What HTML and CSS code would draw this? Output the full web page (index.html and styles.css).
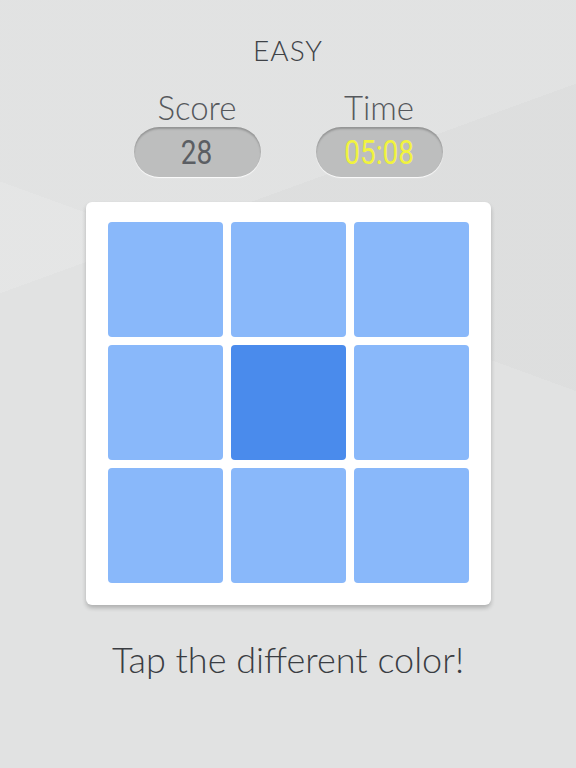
FILE: index.html
```html
<!DOCTYPE html>
<html lang="en">
  <head>
    <meta charset="UTF-8" />
    <meta name="viewport" content="width=device-width, initial-scale=1.0" />
    <title>Color game</title>
    <link rel="stylesheet" href="styles.css">
  </head>
  <body>
    <div class="screen">
      <h2 class="level">EASY</h2>
      <div class="stats">
        <div class="stat">
          <span class="stat-label">Score</span>
          <div class="pill"><span class="pill-value">28</span></div>
        </div>
        <div class="stat">
          <span class="stat-label">Time</span>
          <div class="pill time"><span class="pill-value">05:08</span></div>
        </div>
      </div>
      <div class="board">
        <div class="tile"></div>
        <div class="tile"></div>
        <div class="tile"></div>
        <div class="tile"></div>
        <div class="tile odd"></div>
        <div class="tile"></div>
        <div class="tile"></div>
        <div class="tile"></div>
        <div class="tile"></div>
      </div>
      <p class="hint">Tap the different color!</p>
    </div>
  </body>
</html>
```

FILE: styles.css
```css
html, body {
  margin: 0;
  height: 100%;
}
body {
  background-color: #e1e2e2;
  background-image:
    linear-gradient(160deg, rgba(255,255,255,0.12) 0 30%, transparent 30% 100%),
    linear-gradient(20deg, transparent 0 60%, rgba(0,0,0,0.015) 60% 100%);
  font-family: Lato, "Open Sans", sans-serif;
  color: #3f4247;
}
.screen {
  display: flex;
  flex-direction: column;
  align-items: center;
  padding-top: 33px;
}
.level {
  margin: 0;
  font-size: 28px;
  font-weight: 300;
  letter-spacing: 1px;
  line-height: 34px;
}
.stats {
  display: flex;
  gap: 55px;
  margin-top: 22px;
}
.stat {
  display: flex;
  flex-direction: column;
  align-items: center;
}
.stat-label {
  font-size: 33px;
  font-weight: 300;
  line-height: 36px;
  color: #55585c;
}
.pill {
  margin-top: 2px;
  width: 127px;
  height: 50px;
  border-radius: 25px;
  background: #bdbebe;
  box-shadow: inset 0 2px 2px rgba(0,0,0,0.22), 0 1px 1px rgba(255,255,255,0.9);
  display: flex;
  align-items: center;
  justify-content: center;
}
.pill-value {
  display: inline-block;
  font-family: Roboto, sans-serif;
  font-size: 33px;
  color: #5b5e63;
  transform: scaleX(0.85);
}
.pill.time .pill-value {
  color: #f1f33e;
}
.board {
  margin-top: 25px;
  width: 361px;
  padding: 20px 22px 22px 22px;
  background: #fff;
  border-radius: 6px;
  box-shadow: 0 3px 4px rgba(0,0,0,0.22);
  display: grid;
  grid-template-columns: repeat(3, 115px);
  grid-template-rows: repeat(3, 115px);
  gap: 8px;
}
.tile {
  background: #89b8fa;
  border-radius: 4px;
}
.tile.odd {
  background: #4a8bec;
}
.hint {
  margin: 32px 0 0 0;
  font-size: 36px;
  font-weight: 300;
  line-height: 44px;
  color: #3a3d42;
}
```
